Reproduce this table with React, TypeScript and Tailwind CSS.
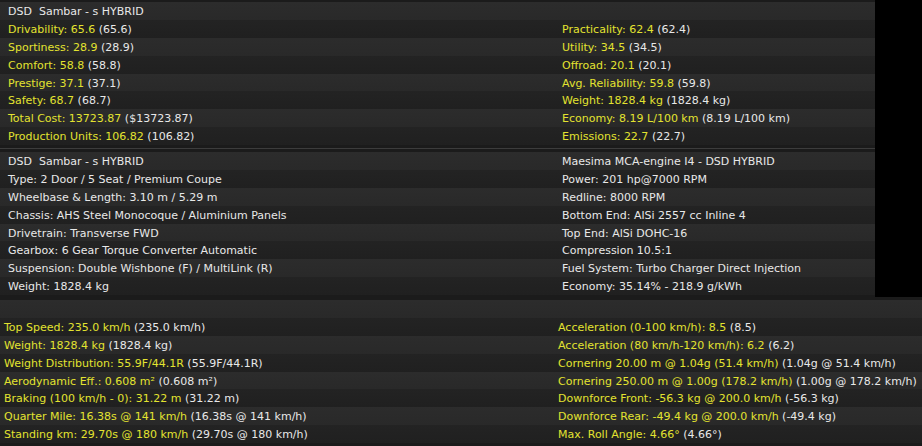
import React from "react";

const Y = ({ a, b }: { a: string; b: string }) => (
  <span>
    <span className="text-[#e3e330]">{a}</span>
    <span className="text-[#e8e8e8]"> {b}</span>
  </span>
);

const W = ({ t }: { t: string }) => <span className="text-[#e8e8e8] whitespace-pre">{t}</span>;

function Row({
  i,
  left,
  right,
  leftPad,
}: {
  i: number;
  left: React.ReactNode;
  right: React.ReactNode;
  leftPad: string;
}) {
  const bg =
    i % 2 === 0
      ? "bg-[linear-gradient(#2c2c2c,#292929)]"
      : "bg-[linear-gradient(#232323,#202020)]";
  return (
    <div className={`flex h-[17.9px] items-center pt-[1px] ${bg} ${leftPad}`}>
      <div className="w-[554px] shrink-0 whitespace-nowrap">{left}</div>
      <div className="whitespace-nowrap">{right}</div>
    </div>
  );
}

export default function App() {
  const p1: [React.ReactNode, React.ReactNode][] = [
    [<W t="DSD  Sambar - s HYBRID" />, null],
    [<Y a="Drivability: 65.6" b="(65.6)" />, <Y a="Practicality: 62.4" b="(62.4)" />],
    [<Y a="Sportiness: 28.9" b="(28.9)" />, <Y a="Utility: 34.5" b="(34.5)" />],
    [<Y a="Comfort: 58.8" b="(58.8)" />, <Y a="Offroad: 20.1" b="(20.1)" />],
    [<Y a="Prestige: 37.1" b="(37.1)" />, <Y a="Avg. Reliability: 59.8" b="(59.8)" />],
    [<Y a="Safety: 68.7" b="(68.7)" />, <Y a="Weight: 1828.4 kg" b="(1828.4 kg)" />],
    [<Y a="Total Cost: 13723.87" b="($13723.87)" />, <Y a="Economy: 8.19 L/100 km" b="(8.19 L/100 km)" />],
    [<Y a="Production Units: 106.82" b="(106.82)" />, <Y a="Emissions: 22.7" b="(22.7)" />],
  ];
  const p2: [string, string][] = [
    ["DSD  Sambar - s HYBRID", "Maesima MCA-engine I4 - DSD HYBRID"],
    ["Type: 2 Door / 5 Seat / Premium Coupe", "Power: 201 hp@7000 RPM"],
    ["Wheelbase & Length: 3.10 m / 5.29 m", "Redline: 8000 RPM"],
    ["Chassis: AHS Steel Monocoque / Aluminium Panels", "Bottom End: AlSi 2557 cc Inline 4"],
    ["Drivetrain: Transverse FWD", "Top End: AlSi DOHC-16"],
    ["Gearbox: 6 Gear Torque Converter Automatic", "Compression 10.5:1"],
    ["Suspension: Double Wishbone (F) / MultiLink (R)", "Fuel System: Turbo Charger Direct Injection"],
    ["Weight: 1828.4 kg", "Economy: 35.14% - 218.9 g/kWh"],
  ];
  const p3: [React.ReactNode, React.ReactNode][] = [
    [null, null],
    [<Y a="Top Speed: 235.0 km/h" b="(235.0 km/h)" />, <Y a="Acceleration (0-100 km/h): 8.5" b="(8.5)" />],
    [<Y a="Weight: 1828.4 kg" b="(1828.4 kg)" />, <Y a="Acceleration (80 km/h-120 km/h): 6.2" b="(6.2)" />],
    [<Y a="Weight Distribution: 55.9F/44.1R" b="(55.9F/44.1R)" />, <Y a="Cornering 20.00 m @ 1.04g (51.4 km/h)" b="(1.04g @ 51.4 km/h)" />],
    [<Y a="Aerodynamic Eff.: 0.608 m²" b="(0.608 m²)" />, <Y a="Cornering 250.00 m @ 1.00g (178.2 km/h)" b="(1.00g @ 178.2 km/h)" />],
    [<Y a="Braking (100 km/h - 0): 31.22 m" b="(31.22 m)" />, <Y a="Downforce Front: -56.3 kg @ 200.0 km/h" b="(-56.3 kg)" />],
    [<Y a="Quarter Mile: 16.38s @ 141 km/h" b="(16.38s @ 141 km/h)" />, <Y a="Downforce Rear: -49.4 kg @ 200.0 km/h" b="(-49.4 kg)" />],
    [<Y a="Standing km: 29.70s @ 180 km/h" b="(29.70s @ 180 km/h)" />, <Y a="Max. Roll Angle: 4.66°" b="(4.66°)" />],
  ];

  return (
    <div
      className="w-[922px] h-[446px] overflow-hidden bg-black text-[11px] leading-none"
      style={{ fontFamily: '"DejaVu Sans", Verdana, sans-serif' }}
    >
      <div className="w-[875px] h-[149px] bg-[#1b1b1b] pt-[2px] border-b border-[#3c3c3c]">
        {p1.map((r, i) => (
          <Row key={i} i={i} left={r[0]} right={r[1]} leftPad="pl-[8px]" />
        ))}
      </div>
      <div className="w-[875px] h-[148px] bg-[#1b1b1b] pt-[3px]">
        {p2.map((r, i) => (
          <Row key={i} i={i} left={<W t={r[0]} />} right={<W t={r[1]} />} leftPad="pl-[8px]" />
        ))}
      </div>
      <div className="w-[922px] h-[149px] bg-[#1b1b1b] pt-[3px]">
        {p3.map((r, i) => (
          <Row key={i} i={i} left={r[0]} right={r[1]} leftPad="pl-[4px]" />
        ))}
      </div>
    </div>
  );
}
